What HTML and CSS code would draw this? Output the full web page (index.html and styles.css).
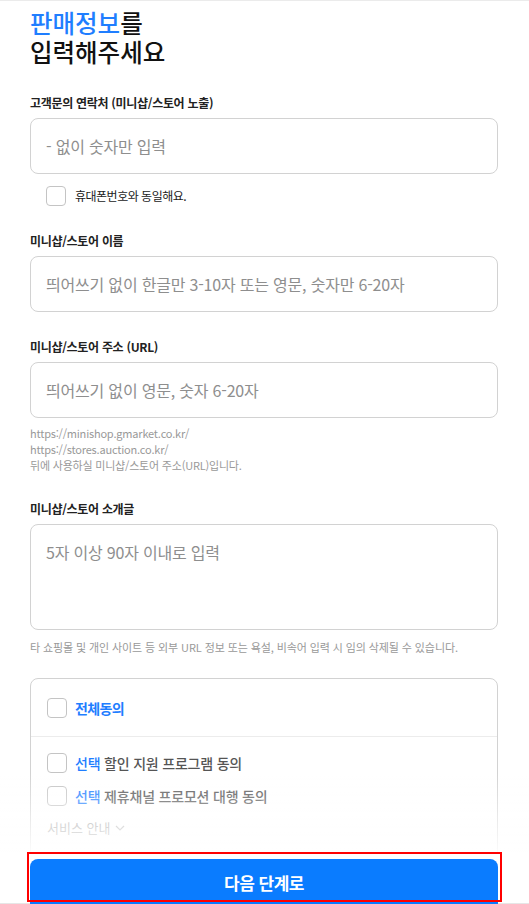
FILE: index.html
```html
<!DOCTYPE html>
<html lang="ko">
<head>
<meta charset="utf-8">
<title>판매정보 입력</title>
<link rel="stylesheet" href="styles.css">
</head>
<body>
<main class="page">
  <h1 class="title"><span class="accent">판매정보</span>를<br>입력해주세요</h1>

  <section class="field field-first">
    <label class="label">고객문의 연락처 (미니샵/스토어 노출)</label>
    <div class="input"><span class="ph">- 없이 숫자만 입력</span></div>
    <div class="check-row">
      <span class="checkbox"></span>
      <span class="check-text">휴대폰번호와 동일해요.</span>
    </div>
  </section>

  <section class="field">
    <label class="label">미니샵/스토어 이름</label>
    <div class="input"><span class="ph">띄어쓰기 없이 한글만 3-10자 또는 영문, 숫자만 6-20자</span></div>
  </section>

  <section class="field">
    <label class="label">미니샵/스토어 주소 (URL)</label>
    <div class="input"><span class="ph">띄어쓰기 없이 영문, 숫자 6-20자</span></div>
    <p class="help help-url">https://minishop.gmarket.co.kr/<br>https://stores.auction.co.kr/<br>뒤에 사용하실 미니샵/스토어 주소(URL)입니다.</p>
  </section>

  <section class="field field-intro">
    <label class="label">미니샵/스토어 소개글</label>
    <div class="textarea"><span class="ph">5자 이상 90자 이내로 입력</span></div>
    <p class="help help-intro">타 쇼핑몰 및 개인 사이트 등 외부 URL 정보 또는 욕설, 비속어 입력 시 임의 삭제될 수 있습니다.</p>
  </section>

  <section class="agree">
    <div class="agree-all">
      <span class="checkbox"></span>
      <span class="agree-all-text">전체동의</span>
    </div>
    <div class="agree-list">
      <div class="agree-row">
        <span class="checkbox"></span>
        <span class="agree-text"><span class="accent">선택</span> 할인 지원 프로그램 동의</span>
      </div>
      <div class="agree-row">
        <span class="checkbox"></span>
        <span class="agree-text"><span class="accent">선택</span> 제휴채널 프로모션 대행 동의</span>
      </div>
      <div class="service">서비스 안내
        <svg class="chev" width="10" height="6" viewBox="0 0 10 6"><path d="M1 1l4 4 4-4" fill="none" stroke="currentColor" stroke-width="1.2"/></svg>
      </div>
    </div>
  </section>
</main>

<footer class="footer">
  <button class="next" type="button">다음 단계로</button>
  <div class="highlight"></div>
</footer>
</body>
</html>
```

FILE: styles.css
```css
* { box-sizing: border-box; }
html, body { margin: 0; padding: 0; background: #fff; }
body {
  font-family: "Noto Sans CJK KR", "Noto Sans", sans-serif;
  color: #222;
}
.page {
  border-top: 1px solid #ebebeb;
  padding: 7px 31px 0 30px;
}
.accent { color: #1f7eff; }
.title {
  margin: 0;
  font-size: 24.5px;
  line-height: 29px;
  font-weight: 500;
  color: #111;
}
.field { margin-top: 25px; }
.field-first { margin-top: 27px; }
.field-intro { margin-top: 26px; }
.label {
  display: block;
  font-size: 12px;
  line-height: 19px;
  font-weight: 700;
  letter-spacing: -0.3px;
  color: #222;
  margin-bottom: 6px;
}
.input {
  height: 56px;
  border: 1px solid #d2d2d2;
  border-radius: 8px;
  display: flex;
  align-items: center;
  padding: 0 15px;
}
.textarea {
  height: 106px;
  border: 1px solid #d2d2d2;
  border-radius: 8px;
  padding: 15px 15px;
  line-height: 24px;
}
.ph {
  font-size: 16px;
  color: #8e8e8e;
  letter-spacing: -0.2px;
}
.check-row {
  margin-top: 12px;
  padding-left: 16px;
  display: flex;
  align-items: center;
  gap: 9px;
  height: 20px;
}
.checkbox {
  width: 20px;
  height: 20px;
  flex: none;
  border: 1px solid #c4c4c4;
  border-radius: 4px;
  background: #fff;
}
.check-text {
  font-size: 12px;
  line-height: 20px;
  letter-spacing: -0.5px;
  color: #222;
}
.help {
  margin: 7px 0 0;
  font-size: 11px;
  line-height: 16px;
  color: #999;
  letter-spacing: -0.2px;
}
.help-intro { margin-top: 9px; letter-spacing: -0.1px; }
.agree {
  margin-top: 23px;
  border: 1px solid #d2d2d2;
  border-radius: 8px;
}
.agree-all {
  display: flex;
  align-items: center;
  gap: 8px;
  padding: 19px 16px 18px;
  border-bottom: 1px solid #ececec;
}
.agree-all-text {
  font-size: 14px;
  line-height: 20px;
  font-weight: 700;
  letter-spacing: -0.6px;
  color: #1f7eff;
}
.agree-list {
  padding: 16px 16px 22px;
  display: flex;
  flex-direction: column;
  gap: 13px;
}
.agree-row {
  display: flex;
  align-items: center;
  gap: 8px;
  height: 20px;
}
.agree-text {
  font-size: 14px;
  line-height: 20px;
  font-weight: 500;
  letter-spacing: -0.2px;
  color: #555;
}
.service {
  margin-top: -1px;
  font-size: 13px;
  line-height: 20px;
  color: #999;
  display: flex;
  align-items: center;
  gap: 5px;
}
.chev { color: #aaa; }
.footer {
  position: fixed;
  left: 0;
  right: 0;
  bottom: 0;
  height: 52px;
  background: #fff;
  border-bottom: 1px solid #e6e6e6;
  padding: 7px 31px 0 30px;
}
.footer::before {
  content: "";
  position: absolute;
  left: 0;
  right: 0;
  top: -80px;
  height: 80px;
  background: linear-gradient(to bottom, rgba(255,255,255,0), rgba(255,255,255,0.9));
  pointer-events: none;
}
.next {
  display: block;
  width: 100%;
  height: 48px;
  border: 0;
  border-radius: 8px 8px 0 0;
  background: #0a7cff;
  color: #fff;
  font-family: inherit;
  font-size: 17px;
  font-weight: 700;
  letter-spacing: -0.5px;
  padding: 0 0 2px;
}
.highlight {
  position: absolute;
  left: 27px;
  top: 0;
  width: 475px;
  height: 50px;
  border: 2px solid #ff0000;
  pointer-events: none;
}
```
